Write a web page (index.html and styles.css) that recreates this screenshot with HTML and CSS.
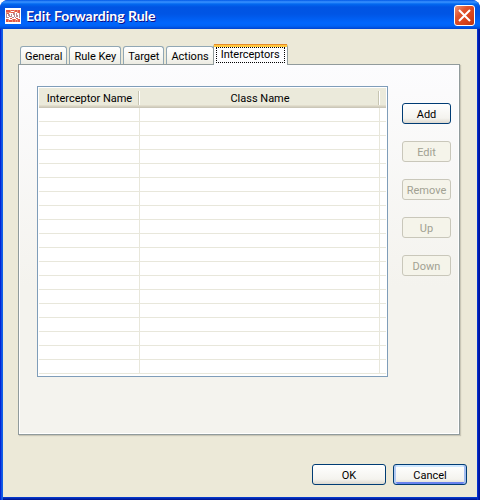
FILE: index.html
```html
<!DOCTYPE html>
<html lang="en">
<head>
  <meta charset="UTF-8">
  <title>Edit Forwarding Rule</title>
  <link rel="stylesheet" href="styles.css">
</head>
<body>
<div class="window">
  <header class="titlebar">
    <svg class="app-icon" width="16" height="16" viewBox="0 0 16 16" shape-rendering="crispEdges">
      <rect width="16" height="16" fill="#fff"/>
      <path fill="#e2564a" d="M1 2h4v2H1zM6 2h3v1H6zM10 2h2v2h-2zM13 2h2v3h-2zM2 5h2v1H2zM6 4h3v1H6zM1 11h2v3H1zM4 12h3v2H4zM8 11h2v3H8zM11 12h1v2h-1zM13 11h2v3h-2zM5 10h2v1H5zM11 10h2v1h-2z"/>
      <path fill="#b98a92" d="M1 5h1v5H1zM3 6h2v2H3zM4 8h2v1H4zM6 6h1v3H6zM8 5h2v2H8zM9 7h1v2H9zM11 5h1v4h-1zM12 7h1v2h-1zM14 5h1v5h-1zM7 9h2v1H7zM2 9h2v1H2zM10 9h1v1h-1z"/>
      <path fill="#f0926f" d="M5 2h1v3H5zM9 2h1v3H9zM12 2h1v3h-1zM3 11h1v3H3zM7 11h1v3H7zM10 11h1v3h-1zM12 11h1v3h-1zM1 4h4v1H1z"/>
    </svg>
    <h1>Edit Forwarding Rule</h1>
    <button class="close" type="button" aria-label="Close">
      <svg width="13" height="13" viewBox="0 0 13 13"><path d="M1 1l11 11M12 1l-11 11" stroke="#fff" stroke-width="2"/></svg>
    </button>
  </header>

  <main class="client">
    <div class="tabs" role="tablist">
      <button class="tab" type="button" role="tab">General</button>
      <button class="tab" type="button" role="tab">Rule Key</button>
      <button class="tab" type="button" role="tab">Target</button>
      <button class="tab" type="button" role="tab">Actions</button>
      <button class="tab selected" type="button" role="tab" aria-selected="true"><span>Interceptors</span></button>
    </div>
    <section class="panel" role="tabpanel">
      <div class="list">
        <table>
          <colgroup><col class="col-name"><col><col class="col-rest"></colgroup>
          <thead>
            <tr><th><span>Interceptor Name</span></th><th><span>Class Name</span></th><th></th></tr>
          </thead>
          <tbody>
            <tr><td></td><td></td><td></td></tr>
            <tr><td></td><td></td><td></td></tr>
            <tr><td></td><td></td><td></td></tr>
            <tr><td></td><td></td><td></td></tr>
            <tr><td></td><td></td><td></td></tr>
            <tr><td></td><td></td><td></td></tr>
            <tr><td></td><td></td><td></td></tr>
            <tr><td></td><td></td><td></td></tr>
            <tr><td></td><td></td><td></td></tr>
            <tr><td></td><td></td><td></td></tr>
            <tr><td></td><td></td><td></td></tr>
            <tr><td></td><td></td><td></td></tr>
            <tr><td></td><td></td><td></td></tr>
            <tr><td></td><td></td><td></td></tr>
            <tr><td></td><td></td><td></td></tr>
            <tr><td></td><td></td><td></td></tr>
            <tr><td></td><td></td><td></td></tr>
            <tr><td></td><td></td><td></td></tr>
            <tr><td></td><td></td><td></td></tr>
          </tbody>
        </table>
      </div>
      <div class="actions">
        <button class="btn" type="button">Add</button>
        <button class="btn" type="button" disabled>Edit</button>
        <button class="btn" type="button" disabled>Remove</button>
        <button class="btn" type="button" disabled>Up</button>
        <button class="btn" type="button" disabled>Down</button>
      </div>
    </section>
    <footer class="buttons">
      <button class="btn" type="button">OK</button>
      <button class="btn default" type="button">Cancel</button>
    </footer>
  </main>
</div>
</body>
</html>
```
FILE: styles.css
```css
* {
  box-sizing: border-box;
}
body {
  margin: 0;
  background: #fff;
  color: #000;
  font-family: Tahoma, Roboto, "DejaVu Sans", sans-serif;
  font-size: 11px;
  line-height: 14px;
}
button {
  font: inherit;
  color: inherit;
  margin: 0;
  padding: 0;
}

/* window frame */
.window {
  display: flex;
  flex-direction: column;
  min-height: 100vh;
  padding: 0 3px 3px 3px;
  border-radius: 8px 8px 0 0;
  background:
    linear-gradient(90deg, #0019cf, #0831d9 1px, #166aee 2px, #0855dd 3px) left / 3px 100% no-repeat,
    linear-gradient(90deg, #0842d8, #001dbe 1px, #00138c 3px) right / 3px 100% no-repeat,
    linear-gradient(#0841d8, #001ea0 2px, #00138c 3px) bottom / 100% 3px no-repeat,
    #0831d9;
}
.titlebar {
  display: flex;
  align-items: center;
  height: 29px;
  margin: 0 -3px;
  padding: 2px 5px 0 5px;
  border-radius: 8px 8px 0 0;
  background: linear-gradient(#0058e6 0, #3a93ff 2px, #0269f0 4px, #0054e3 7px, #0055e5 14px, #0066fd 23px, #0062f5 26px, #0043cf 29px);
}
.titlebar h1 {
  flex: 1;
  margin: 0 0 0 5px;
  color: #fff;
  font-family: "Trebuchet MS", Lato, sans-serif;
  font-size: 14px;
  font-weight: 700;
  line-height: 18px;
  text-shadow: 1px 1px 0 #0f1089;
}
.close {
  display: flex;
  align-items: center;
  justify-content: center;
  width: 21px;
  height: 21px;
  border: 1px solid #fff;
  border-radius: 3px;
  background: linear-gradient(135deg, #ee9478, #e0532c 35%, #d8421a 70%, #b83412);
}

.client {
  flex: 1;
  display: flex;
  flex-direction: column;
  padding: 15px 10px 12px 15px;
  background: #ece9d8;
}

/* tabs */
.tabs {
  display: flex;
  align-items: flex-end;
  gap: 2px;
  padding-left: 2px;
}
.tab {
  height: 18px;
  padding: 2px 4px 0;
  border: 1px solid #91a7b4;
  border-bottom: 0;
  border-radius: 3px 3px 0 0;
  background: linear-gradient(#fff, #f6f6f1 60%, #ecebe2);
}
.tab.selected {
  position: relative;
  height: 21px;
  margin: 0 0 -1px -3px;
  padding: 0 2px 2px;
  border-color: #919b9c;
  border-top: 3px solid #ffc73c;
  background: #fcfcfe;
}
.tab.selected::before {
  content: "";
  position: absolute;
  top: -3px;
  left: 0;
  right: 0;
  height: 1px;
  background: #e68b2c;
}
.tab.selected span {
  display: block;
  padding: 0 4px;
  border: 1px dotted #000;
}
.panel {
  flex: 1;
  display: flex;
  align-items: flex-start;
  gap: 14px;
  margin-right: 7px;
  padding: 21px 8px 20px 18px;
  border: 1px solid #919b9c;
  background: linear-gradient(#fcfcfe, #f4f3ee 60%);
  box-shadow: inset -1px -1px 0 #fff, inset 1px 0 0 #fff, 1px 1px 1px #c9c6b6;
}

/* interceptor list */
.list {
  flex: 1;
  padding: 1px 1px 2px;
  border: 1px solid #7f9db9;
  background: #fff;
}
table {
  width: 100%;
  table-layout: fixed;
  border-collapse: separate;
  border-spacing: 0;
}
.col-name {
  width: 101px;
}
.col-rest {
  width: 6px;
}
th {
  height: 20px;
  padding: 3px 0;
  font-weight: 400;
  background: linear-gradient(#ebeadb 17px, #e2decd 17px 18px, #d6d2c2 18px 19px, #cbc7b8 19px);
}
th span {
  display: block;
  height: 14px;
  padding-left: 2px;
  line-height: 16px;
  border-right: 1px solid #c7c5b2;
  box-shadow: 1px 0 0 #fff;
  margin-right: 1px;
  white-space: nowrap;
}
td {
  height: 14px;
  padding: 0;
  border-right: 1px solid #e8e7db;
  border-bottom: 1px solid #e8e7db;
}
td:last-child {
  border-right: 0;
}

/* push buttons */
.actions {
  display: flex;
  flex-direction: column;
  gap: 17px;
  padding-top: 17px;
}
.btn {
  width: 49px;
  height: 21px;
  padding-top: 2px;
  border: 1px solid #003c74;
  border-radius: 3px;
  background: linear-gradient(#fff, #f4f3ee 75%, #dcd8cf);
}
.btn:disabled {
  color: #a1a192;
  border-color: #c9c7ba;
  background: #f5f4ea;
}
.buttons {
  display: flex;
  justify-content: flex-end;
  gap: 7px;
  padding-top: 29px;
}
.buttons .btn {
  width: 74px;
}
.btn.default {
  box-shadow: inset 2px 0 0 #b4caf2, inset -2px 0 0 #a3bdf0, inset 0 2px 0 #cee7ff, inset 0 -2px 0 #6982ee;
}
```
